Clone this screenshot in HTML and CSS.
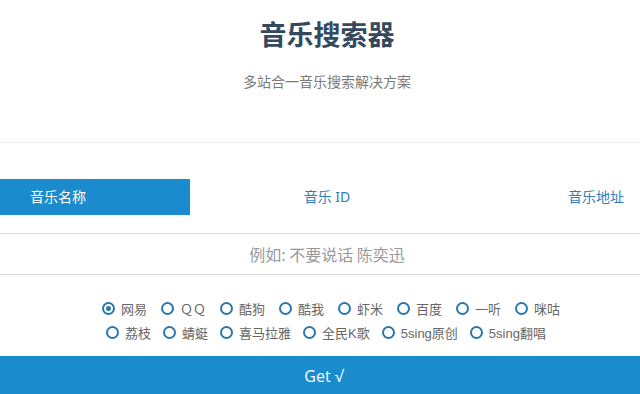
FILE: index.html
```html
<!DOCTYPE html>
<html lang="zh-CN">
<head>
    <meta charset="UTF-8">
    <title>音乐搜索器</title>
    <link rel="stylesheet" href="styles.css">
</head>
<body>

<div id="header">
    <h1 id="title">音乐搜索器</h1>
    <p id="subtitle">多站合一音乐搜索解决方案</p>
</div>

<div id="tabs">
    <div class="tab active">音乐名称</div>
    <div class="tab middle">音乐 ID</div>
    <div class="tab last">音乐地址</div>
</div>

<div id="searchBox">
    <input id="searchInput" type="text" placeholder="例如: 不要说话 陈奕迅">
</div>

<div id="sites">
    <div class="siteRow">
        <label class="site"><span class="radio checked"></span>网易</label>
        <label class="site"><span class="radio"></span>ＱＱ</label>
        <label class="site"><span class="radio"></span>酷狗</label>
        <label class="site"><span class="radio"></span>酷我</label>
        <label class="site"><span class="radio"></span>虾米</label>
        <label class="site"><span class="radio"></span>百度</label>
        <label class="site"><span class="radio"></span>一听</label>
        <label class="site"><span class="radio"></span>咪咕</label>
    </div>
    <div class="siteRow second">
        <label class="site"><span class="radio"></span>荔枝</label>
        <label class="site"><span class="radio"></span>蜻蜓</label>
        <label class="site"><span class="radio"></span>喜马拉雅</label>
        <label class="site"><span class="radio"></span>全民K歌</label>
        <label class="site"><span class="radio"></span>5sing原创</label>
        <label class="site"><span class="radio"></span>5sing翻唱</label>
    </div>
</div>

<button id="getButton">Get √</button>

</body>
</html>
```

FILE: styles.css
```css
body {
    margin: 0;
    font-family: "Noto Sans", "Noto Sans CJK SC", sans-serif;
    background-color: #fff;
}
#header {
    text-align: center;
    border-bottom: 1px solid #f0f0f0;
    height: 143px;
    box-sizing: border-box;
    padding-left: 14px;
}
#title {
    margin: 0;
    padding-top: 15px;
    font-size: 27px;
    line-height: 38px;
    font-weight: bold;
    color: #34495e;
    font-family: "Noto Sans CJK SC", sans-serif;
}
#subtitle {
    margin: 18px 0 0 0;
    font-size: 14px;
    line-height: 20px;
    color: #7a7a7a;
    font-family: "Noto Sans CJK SC", sans-serif;
}
#tabs {
    display: flex;
    margin-top: 36px;
    height: 36px;
}
.tab {
    font-size: 14px;
    line-height: 36px;
    color: #2b7fb8;
}
.active {
    width: 190px;
    box-sizing: border-box;
    padding-left: 30px;
    background-color: #1a8ccd;
    color: #fff;
}
.middle {
    width: 274px;
    text-align: center;
}
.last {
    flex: 1;
    text-align: right;
    padding-right: 16px;
}
#searchBox {
    margin-top: 18px;
    border-top: 1px solid #dcdcdc;
    border-bottom: 1px solid #dcdcdc;
}
#searchInput {
    display: block;
    width: 100%;
    height: 40px;
    border: none;
    outline: none;
    text-align: center;
    font-size: 16px;
    padding: 0 0 0 14px;
    box-sizing: border-box;
    font-family: "Noto Sans CJK SC", sans-serif;
}
#searchInput::placeholder {
    color: #999;
}
#sites {
    padding-top: 21px;
    padding-left: 22px;
}
.siteRow {
    display: flex;
    justify-content: center;
    gap: 14px;
    height: 24px;
}
.second {
    gap: 12px;
    padding-right: 10px;
}
.site {
    display: flex;
    align-items: center;
    gap: 6px;
    font-size: 13px;
    color: #666;
    font-family: "Liberation Sans", "Noto Sans CJK SC", sans-serif;
}
.radio {
    width: 9px;
    height: 9px;
    border: 2px solid #2a77ae;
    border-radius: 50%;
    display: flex;
    align-items: center;
    justify-content: center;
}
.checked::after {
    content: "";
    width: 5px;
    height: 5px;
    border-radius: 50%;
    background-color: #2a77ae;
}
#getButton {
    display: block;
    width: 100%;
    margin-top: 12px;
    height: 40px;
    border: none;
    background-color: #1a8ccd;
    color: #fff;
    font-size: 16px;
    padding-left: 14px;
    font-family: "Open Sans", sans-serif;
    cursor: pointer;
}
```
